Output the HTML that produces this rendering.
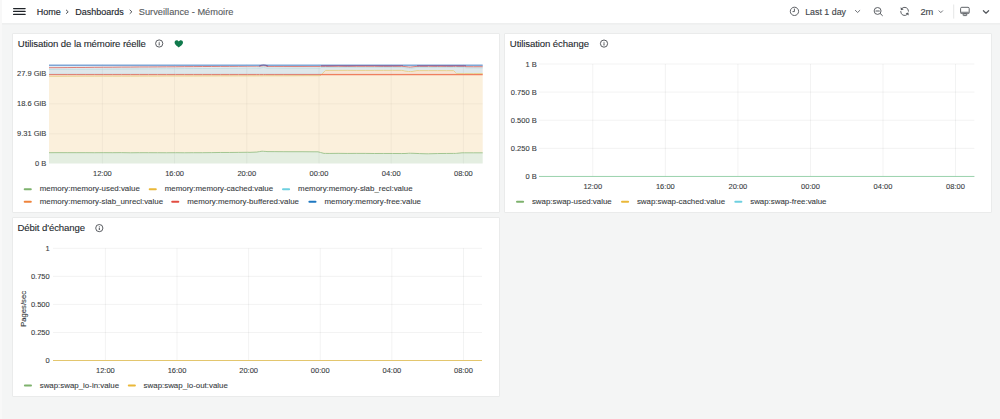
<!DOCTYPE html><html><head><meta charset="utf-8"><title>Surveillance - Mémoire</title><style>
html,body{margin:0;padding:0;}
body{width:1000px;height:419px;overflow:hidden;background:#f4f5f5;font-family:"Liberation Sans", sans-serif;position:relative;}
.strip{position:absolute;left:0;top:0;width:2px;height:419px;background:#f8f8f8;z-index:5;}
.hdr{position:absolute;left:0;top:0;width:1000px;height:23px;background:#fff;box-shadow:0 1px 0 #eeefef, 0 2px 1px rgba(0,0,0,0.015);}
.panel{position:absolute;background:#fff;box-shadow:inset 0 0 0 1px #eaebeb;border-radius:1px;}
svg{position:absolute;left:0;top:0;overflow:visible;font-family:"Liberation Sans", sans-serif;}
.wrap{position:absolute;left:0;top:0;width:1000px;height:419px;}

</style></head><body>
<div class="wrap"><div class="strip"></div>
<div class="hdr"><svg width="1000" height="23" viewBox="0 0 1000 23">
<line x1="13.6" y1="8.5" x2="25.1" y2="8.5" stroke="#1f2328" stroke-width="1.25" stroke-linecap="round"/>
<line x1="13.6" y1="11.44" x2="25.1" y2="11.44" stroke="#1f2328" stroke-width="1.25" stroke-linecap="round"/>
<line x1="13.6" y1="14.42" x2="25.1" y2="14.42" stroke="#1f2328" stroke-width="1.25" stroke-linecap="round"/>
<text x="36.7" y="14.7" font-size="9" fill="#24292e" text-anchor="start" font-weight="400" stroke="#24292e" stroke-width="0.15">Home</text>
<path d="M66.3,10.1 L68.2,11.8 L66.3,13.5" fill="none" stroke="#4a4e53" stroke-width="0.95" stroke-linecap="round" stroke-linejoin="round"/>
<text x="75.3" y="14.7" font-size="9" fill="#24292e" text-anchor="start" font-weight="400" stroke="#24292e" stroke-width="0.15">Dashboards</text>
<path d="M130.0,10.1 L131.9,11.8 L130.0,13.5" fill="none" stroke="#4a4e53" stroke-width="0.95" stroke-linecap="round" stroke-linejoin="round"/>
<text x="138.8" y="14.7" font-size="9.25" fill="#575b60" text-anchor="start" font-weight="400" stroke="#575b60" stroke-width="0.12">Surveillance - Mémoire</text>
<circle cx="794.45" cy="11.35" r="4.15" fill="none" stroke="#55595e" stroke-width="0.95"/>
<path d="M794.4,9.0 L794.4,11.6 L792.9,11.6" fill="none" stroke="#55595e" stroke-width="0.95" stroke-linecap="round" stroke-linejoin="round"/>
<text x="805.2" y="14.9" font-size="8.85" fill="#44484d" text-anchor="start" font-weight="400" stroke="#44484d" stroke-width="0.15">Last 1 day</text>
<path d="M855.4,10.4 L857.6,12.5 L859.8,10.4" fill="none" stroke="#55595e" stroke-width="0.85" stroke-linecap="round" stroke-linejoin="round"/>
<circle cx="877.6" cy="10.95" r="3.45" fill="none" stroke="#55595e" stroke-width="0.95"/>
<line x1="875.9" y1="10.95" x2="879.3" y2="10.95" stroke="#55595e" stroke-width="1.1" stroke-linecap="round"/>
<line x1="880.3" y1="13.6" x2="882.4" y2="15.6" stroke="#55595e" stroke-width="1.0" stroke-linecap="round"/>
<path d="M902.0,8.3 A3.9,3.9 0 0 1 908.5,11.2" fill="none" stroke="#55595e" stroke-width="0.95" stroke-linecap="round"/>
<path d="M907.2,14.5 A3.9,3.9 0 0 1 900.7,11.5" fill="none" stroke="#55595e" stroke-width="0.95" stroke-linecap="round"/>
<path d="M900.6,7.3 L900.9,10.3 L903.7,9.6 Z" fill="#55595e"/>
<path d="M908.7,15.5 L908.4,12.5 L905.6,13.2 Z" fill="#55595e"/>
<text x="920.4" y="14.8" font-size="9.3" fill="#44484d" text-anchor="start" font-weight="400" stroke="#44484d" stroke-width="0.15">2m</text>
<path d="M939.0,10.8 L940.8,12.6 L942.6,10.8" fill="none" stroke="#55595e" stroke-width="0.85" stroke-linecap="round" stroke-linejoin="round"/>
<line x1="953.7" y1="4.5" x2="953.7" y2="18.6" stroke="rgba(36,41,46,0.15)" stroke-width="0.8"/>
<rect x="960.6" y="7.3" width="8.6" height="6.3" rx="1.2" fill="none" stroke="#55595e" stroke-width="0.95"/>
<rect x="960.6" y="11.7" width="8.6" height="1.9" fill="#8b8e92"/>
<rect x="963.2" y="13.9" width="3.5" height="1.7" rx="0.3" fill="none" stroke="#55595e" stroke-width="0.9"/>
<path d="M983.4,10.7 L986.0,13.2 L988.6,10.7" fill="none" stroke="#55595e" stroke-width="1.25" stroke-linecap="round" stroke-linejoin="round"/>
</svg></div>
<div class="panel" style="left:12px;top:33px;width:488px;height:180px">
<svg width="488" height="180" viewBox="12 33 488 180">
<text x="17.8" y="47.199999999999996" font-size="9.6" fill="#24292e" text-anchor="start" font-weight="400" stroke="#24292e" stroke-width="0.1" letter-spacing="-0.1">Utilisation de la mémoire réelle</text>
<circle cx="159.2" cy="43.5" r="3.6" fill="none" stroke="#3d4147" stroke-width="0.85"/><circle cx="159.2" cy="42.15" r="0.5" fill="#3d4147"/><line x1="159.2" y1="43.55" x2="159.2" y2="45.0" stroke="#3d4147" stroke-width="0.95" stroke-linecap="round"/>
<path transform="translate(178.8,43.8)" d="M0,3.6 C-1.2,2.6 -4.2,0.6 -4.2,-1.4 C-4.2,-2.8 -3.2,-3.6 -2.1,-3.6 C-1.1,-3.6 -0.4,-3.0 0,-2.3 C0.4,-3.0 1.1,-3.6 2.1,-3.6 C3.2,-3.6 4.2,-2.8 4.2,-1.4 C4.2,0.6 1.2,2.6 0,3.6 Z" fill="#107a4c"/>
<text x="46.2" y="76.1" font-size="7.5" fill="#383c41" text-anchor="end" font-weight="400" stroke="#383c41" stroke-width="0.1">27.9 GiB</text>
<text x="46.2" y="106.2" font-size="7.5" fill="#383c41" text-anchor="end" font-weight="400" stroke="#383c41" stroke-width="0.1">18.6 GiB</text>
<text x="46.2" y="136.20000000000002" font-size="7.5" fill="#383c41" text-anchor="end" font-weight="400" stroke="#383c41" stroke-width="0.1">9.31 GiB</text>
<text x="46.2" y="165.9" font-size="7.5" fill="#383c41" text-anchor="end" font-weight="400" stroke="#383c41" stroke-width="0.1">0 B</text>
<text x="102.4" y="175.9" font-size="7.5" fill="#383c41" text-anchor="middle" font-weight="400" stroke="#383c41" stroke-width="0.1">12:00</text>
<text x="174.6" y="175.9" font-size="7.5" fill="#383c41" text-anchor="middle" font-weight="400" stroke="#383c41" stroke-width="0.1">16:00</text>
<text x="246.8" y="175.9" font-size="7.5" fill="#383c41" text-anchor="middle" font-weight="400" stroke="#383c41" stroke-width="0.1">20:00</text>
<text x="319.0" y="175.9" font-size="7.5" fill="#383c41" text-anchor="middle" font-weight="400" stroke="#383c41" stroke-width="0.1">00:00</text>
<text x="391.2" y="175.9" font-size="7.5" fill="#383c41" text-anchor="middle" font-weight="400" stroke="#383c41" stroke-width="0.1">04:00</text>
<text x="463.4" y="175.9" font-size="7.5" fill="#383c41" text-anchor="middle" font-weight="400" stroke="#383c41" stroke-width="0.1">08:00</text>
<path d="M49.0,152.70 L58.0,152.65 L67.1,152.66 L76.1,152.67 L85.1,152.66 L94.2,152.71 L103.2,152.66 L112.2,152.69 L121.3,152.64 L130.3,152.77 L139.3,152.68 L148.4,152.69 L157.4,152.71 L166.5,152.76 L175.5,152.69 L184.5,152.77 L193.6,152.70 L200.0,152.70 L202.6,152.69 L211.6,152.62 L220.7,152.48 L229.7,152.48 L238.7,152.38 L247.8,152.29 L250.0,152.35 L256.8,152.06 L257.0,152.00 L259.5,151.60 L260.0,151.52 L262.0,151.20 L263.5,151.32 L265.9,151.46 L267.0,151.60 L274.9,151.63 L283.9,151.70 L293.0,151.71 L302.0,151.71 L311.0,151.78 L318.0,151.80 L320.1,152.36 L320.5,152.47 L321.0,152.60 L324.0,153.40 L325.5,153.40 L329.1,153.45 L338.1,153.35 L347.2,153.44 L356.2,153.40 L365.2,153.42 L374.3,153.51 L383.3,153.47 L392.4,153.49 L401.4,153.54 L403.0,153.50 L405.0,153.50 L408.5,153.29 L410.0,153.20 L410.4,153.28 L412.0,153.28 L417.0,153.48 L419.4,153.57 L420.0,153.60 L427.0,153.80 L428.5,153.78 L437.5,153.56 L440.0,153.50 L446.6,153.46 L453.6,153.41 L455.6,153.43 L456.0,153.40 L456.4,153.36 L462.0,152.80 L464.6,152.79 L466.0,152.80 L473.7,152.81 L482.7,152.80 L482.7,163.60 L49.0,163.60 Z" fill="#e4eee1"/>
<path d="M49.0,76.30 L58.0,76.32 L67.1,76.25 L76.1,76.22 L85.1,76.20 L94.2,76.18 L103.2,76.16 L112.2,76.17 L121.3,76.17 L130.3,76.15 L139.3,76.10 L148.4,76.09 L157.4,76.08 L166.5,76.01 L175.5,76.03 L184.5,76.03 L193.6,76.00 L200.0,75.97 L202.6,75.98 L211.6,75.94 L220.7,75.89 L229.7,75.92 L238.7,75.87 L247.8,75.88 L250.0,75.85 L256.8,75.88 L257.0,75.84 L259.5,75.83 L260.0,75.83 L262.0,75.83 L263.5,75.83 L265.9,75.81 L267.0,75.82 L274.9,75.79 L283.9,75.82 L293.0,75.78 L302.0,75.71 L311.0,75.69 L318.0,75.70 L320.1,75.67 L320.5,75.50 L321.0,74.99 L324.0,71.93 L325.5,70.40 L329.1,70.43 L338.1,70.42 L347.2,70.37 L356.2,70.43 L365.2,70.44 L374.3,70.41 L383.3,70.39 L392.4,70.40 L401.4,70.37 L403.0,70.50 L405.0,71.07 L408.5,71.50 L410.0,71.50 L410.4,71.46 L412.0,71.50 L417.0,70.60 L419.4,70.64 L420.0,70.60 L427.0,70.60 L428.5,70.61 L437.5,70.60 L440.0,70.60 L446.6,70.63 L453.6,70.60 L455.6,72.66 L456.0,73.09 L456.4,73.60 L462.0,73.60 L464.6,73.63 L466.0,73.60 L473.7,73.63 L482.7,73.60 L482.7,152.80 L473.7,152.81 L466.0,152.80 L464.6,152.79 L462.0,152.80 L456.4,153.36 L456.0,153.40 L455.6,153.43 L453.6,153.41 L446.6,153.46 L440.0,153.50 L437.5,153.56 L428.5,153.78 L427.0,153.80 L420.0,153.60 L419.4,153.57 L417.0,153.48 L412.0,153.28 L410.4,153.28 L410.0,153.20 L408.5,153.29 L405.0,153.50 L403.0,153.50 L401.4,153.54 L392.4,153.49 L383.3,153.47 L374.3,153.51 L365.2,153.42 L356.2,153.40 L347.2,153.44 L338.1,153.35 L329.1,153.45 L325.5,153.40 L324.0,153.40 L321.0,152.60 L320.5,152.47 L320.1,152.36 L318.0,151.80 L311.0,151.78 L302.0,151.71 L293.0,151.71 L283.9,151.70 L274.9,151.63 L267.0,151.60 L265.9,151.46 L263.5,151.32 L262.0,151.20 L260.0,151.52 L259.5,151.60 L257.0,152.00 L256.8,152.06 L250.0,152.35 L247.8,152.29 L238.7,152.38 L229.7,152.48 L220.7,152.48 L211.6,152.62 L202.6,152.69 L200.0,152.70 L193.6,152.70 L184.5,152.77 L175.5,152.69 L166.5,152.76 L157.4,152.71 L148.4,152.69 L139.3,152.68 L130.3,152.77 L121.3,152.64 L112.2,152.69 L103.2,152.66 L94.2,152.71 L85.1,152.66 L76.1,152.67 L67.1,152.66 L58.0,152.65 L49.0,152.70 Z" fill="#fbf0dc"/>
<path d="M49.0,74.60 L58.0,74.60 L67.1,74.60 L76.1,74.60 L85.1,74.60 L94.2,74.60 L103.2,74.60 L112.2,74.60 L121.3,74.60 L130.3,74.60 L139.3,74.60 L148.4,74.60 L157.4,74.60 L166.5,74.60 L175.5,74.60 L184.5,74.60 L193.6,74.60 L200.0,74.60 L202.6,74.60 L211.6,74.60 L220.7,74.60 L229.7,74.60 L238.7,74.60 L247.8,74.60 L250.0,74.60 L256.8,74.60 L257.0,74.60 L259.5,74.60 L260.0,74.60 L262.0,74.60 L263.5,74.60 L265.9,74.60 L267.0,74.60 L274.9,74.60 L283.9,74.60 L293.0,74.60 L302.0,74.60 L311.0,74.60 L318.0,74.60 L320.1,74.60 L320.5,74.60 L321.0,74.60 L324.0,74.60 L325.5,74.60 L329.1,74.60 L338.1,74.60 L347.2,74.60 L356.2,74.60 L365.2,74.60 L374.3,74.60 L383.3,74.60 L392.4,74.60 L401.4,74.60 L403.0,74.60 L405.0,74.60 L408.5,74.60 L410.0,74.60 L410.4,74.60 L412.0,74.60 L417.0,74.60 L419.4,74.60 L420.0,74.60 L427.0,74.60 L428.5,74.60 L437.5,74.60 L440.0,74.60 L446.6,74.60 L453.6,74.60 L455.6,74.60 L456.0,74.60 L456.4,74.60 L462.0,74.60 L464.6,74.60 L466.0,74.60 L473.7,74.60 L482.7,74.60 L482.7,73.60 L473.7,73.63 L466.0,73.60 L464.6,73.63 L462.0,73.60 L456.4,73.60 L456.0,73.09 L455.6,72.66 L453.6,70.60 L446.6,70.63 L440.0,70.60 L437.5,70.60 L428.5,70.61 L427.0,70.60 L420.0,70.60 L419.4,70.64 L417.0,70.60 L412.0,71.50 L410.4,71.46 L410.0,71.50 L408.5,71.50 L405.0,71.07 L403.0,70.50 L401.4,70.37 L392.4,70.40 L383.3,70.39 L374.3,70.41 L365.2,70.44 L356.2,70.43 L347.2,70.37 L338.1,70.42 L329.1,70.43 L325.5,70.40 L324.0,71.93 L321.0,74.99 L320.5,75.50 L320.1,75.67 L318.0,75.70 L311.0,75.69 L302.0,75.71 L293.0,75.78 L283.9,75.82 L274.9,75.79 L267.0,75.82 L265.9,75.81 L263.5,75.83 L262.0,75.83 L260.0,75.83 L259.5,75.83 L257.0,75.84 L256.8,75.88 L250.0,75.85 L247.8,75.88 L238.7,75.87 L229.7,75.92 L220.7,75.89 L211.6,75.94 L202.6,75.98 L200.0,75.97 L193.6,76.00 L184.5,76.03 L175.5,76.03 L166.5,76.01 L157.4,76.08 L148.4,76.09 L139.3,76.10 L130.3,76.15 L121.3,76.17 L112.2,76.17 L103.2,76.16 L94.2,76.18 L85.1,76.20 L76.1,76.22 L67.1,76.25 L58.0,76.32 L49.0,76.30 Z" fill="#f8e4d3"/>
<path d="M49.0,69.50 L58.0,69.42 L67.1,69.37 L76.1,69.31 L85.1,69.29 L94.2,69.24 L103.2,69.11 L112.2,69.05 L121.3,69.00 L130.3,68.94 L139.3,68.90 L148.4,68.85 L157.4,68.76 L166.5,68.68 L175.5,68.65 L184.5,68.59 L193.6,68.55 L200.0,68.50 L202.6,68.52 L211.6,68.44 L220.7,68.36 L229.7,68.31 L238.7,68.26 L247.8,68.15 L250.0,68.17 L256.8,68.15 L257.0,68.12 L259.5,68.10 L260.0,68.10 L262.0,67.70 L263.5,67.40 L265.9,67.89 L267.0,68.10 L274.9,68.13 L283.9,68.12 L293.0,68.09 L302.0,68.09 L311.0,68.07 L318.0,68.10 L320.1,68.11 L320.5,68.10 L321.0,67.40 L324.0,67.40 L325.5,67.40 L329.1,67.36 L338.1,67.37 L347.2,67.38 L356.2,67.37 L365.2,67.39 L374.3,67.36 L383.3,67.36 L392.4,67.37 L401.4,67.37 L403.0,67.40 L405.0,67.69 L408.5,68.19 L410.0,68.40 L410.4,68.33 L412.0,68.11 L417.0,67.40 L419.4,67.36 L420.0,67.40 L427.0,67.40 L428.5,67.43 L437.5,67.41 L440.0,67.40 L446.6,67.37 L453.6,67.40 L455.6,67.38 L456.0,67.40 L456.4,67.40 L462.0,67.40 L464.6,67.39 L466.0,67.90 L473.7,67.89 L482.7,67.90 L482.7,73.60 L473.7,73.63 L466.0,73.60 L464.6,73.63 L462.0,73.60 L456.4,73.60 L456.0,73.09 L455.6,72.66 L453.6,70.60 L446.6,70.63 L440.0,70.60 L437.5,70.60 L428.5,70.61 L427.0,70.60 L420.0,70.60 L419.4,70.64 L417.0,70.60 L412.0,71.50 L410.4,71.46 L410.0,71.50 L408.5,71.50 L405.0,71.07 L403.0,70.50 L401.4,70.37 L392.4,70.40 L383.3,70.39 L374.3,70.41 L365.2,70.44 L356.2,70.43 L347.2,70.37 L338.1,70.42 L329.1,70.43 L325.5,70.40 L324.0,71.93 L321.0,74.60 L320.5,74.60 L320.1,74.60 L318.0,74.60 L311.0,74.60 L302.0,74.60 L293.0,74.60 L283.9,74.60 L274.9,74.60 L267.0,74.60 L265.9,74.60 L263.5,74.60 L262.0,74.60 L260.0,74.60 L259.5,74.60 L257.0,74.60 L256.8,74.60 L250.0,74.60 L247.8,74.60 L238.7,74.60 L229.7,74.60 L220.7,74.60 L211.6,74.60 L202.6,74.60 L200.0,74.60 L193.6,74.60 L184.5,74.60 L175.5,74.60 L166.5,74.60 L157.4,74.60 L148.4,74.60 L139.3,74.60 L130.3,74.60 L121.3,74.60 L112.2,74.60 L103.2,74.60 L94.2,74.60 L85.1,74.60 L76.1,74.60 L67.1,74.60 L58.0,74.60 L49.0,74.60 Z" fill="#dfe7ea"/>
<path d="M49.0,67.70 L58.0,67.66 L67.1,67.58 L76.1,67.48 L85.1,67.46 L94.2,67.33 L103.2,67.28 L112.2,67.24 L121.3,67.12 L130.3,67.08 L139.3,66.98 L148.4,66.96 L157.4,66.90 L166.5,66.82 L175.5,66.77 L184.5,66.66 L193.6,66.62 L200.0,66.55 L202.6,66.54 L211.6,66.47 L220.7,66.39 L229.7,66.36 L238.7,66.30 L247.8,66.19 L250.0,66.18 L256.8,66.14 L257.0,66.12 L259.5,66.10 L260.0,66.10 L262.0,65.90 L263.5,65.75 L265.9,65.95 L267.0,66.40 L274.9,66.42 L283.9,66.41 L293.0,66.44 L302.0,66.43 L311.0,66.38 L318.0,66.40 L320.1,66.39 L320.5,66.40 L321.0,66.35 L324.0,66.35 L325.5,66.35 L329.1,66.36 L338.1,66.31 L347.2,66.35 L356.2,66.32 L365.2,66.32 L374.3,66.31 L383.3,66.37 L392.4,66.32 L401.4,66.33 L403.0,66.35 L405.0,66.58 L408.5,66.98 L410.0,67.15 L410.4,67.09 L412.0,66.92 L417.0,66.35 L419.4,66.38 L420.0,66.35 L427.0,66.35 L428.5,66.32 L437.5,66.35 L440.0,66.35 L446.6,66.35 L453.6,66.35 L455.6,66.38 L456.0,66.35 L456.4,66.35 L462.0,66.35 L464.6,66.38 L466.0,66.70 L473.7,66.73 L482.7,66.70 L482.7,67.90 L473.7,67.89 L466.0,67.90 L464.6,67.39 L462.0,67.40 L456.4,67.40 L456.0,67.40 L455.6,67.38 L453.6,67.40 L446.6,67.37 L440.0,67.40 L437.5,67.41 L428.5,67.43 L427.0,67.40 L420.0,67.40 L419.4,67.36 L417.0,67.40 L412.0,68.11 L410.4,68.33 L410.0,68.40 L408.5,68.19 L405.0,67.69 L403.0,67.40 L401.4,67.37 L392.4,67.37 L383.3,67.36 L374.3,67.36 L365.2,67.39 L356.2,67.37 L347.2,67.38 L338.1,67.37 L329.1,67.36 L325.5,67.40 L324.0,67.40 L321.0,67.40 L320.5,68.10 L320.1,68.11 L318.0,68.10 L311.0,68.07 L302.0,68.09 L293.0,68.09 L283.9,68.12 L274.9,68.13 L267.0,68.10 L265.9,67.89 L263.5,67.40 L262.0,67.70 L260.0,68.10 L259.5,68.10 L257.0,68.12 L256.8,68.15 L250.0,68.17 L247.8,68.15 L238.7,68.26 L229.7,68.31 L220.7,68.36 L211.6,68.44 L202.6,68.52 L200.0,68.50 L193.6,68.55 L184.5,68.59 L175.5,68.65 L166.5,68.68 L157.4,68.76 L148.4,68.85 L139.3,68.90 L130.3,68.94 L121.3,69.00 L112.2,69.05 L103.2,69.11 L94.2,69.24 L85.1,69.29 L76.1,69.31 L67.1,69.37 L58.0,69.42 L49.0,69.50 Z" fill="#e6ebee"/>
<path d="M49.0,65.20 L58.0,65.19 L67.1,65.18 L76.1,65.21 L85.1,65.17 L94.2,65.20 L103.2,65.19 L112.2,65.17 L121.3,65.20 L130.3,65.17 L139.3,65.20 L148.4,65.17 L157.4,65.18 L166.5,65.20 L175.5,65.22 L184.5,65.18 L193.6,65.18 L200.0,65.20 L202.6,65.21 L211.6,65.23 L220.7,65.20 L229.7,65.19 L238.7,65.23 L247.8,65.17 L250.0,65.20 L256.8,65.22 L257.0,65.20 L259.5,65.20 L260.0,65.20 L262.0,65.20 L263.5,65.20 L265.9,65.19 L267.0,65.20 L274.9,65.18 L283.9,65.18 L293.0,65.19 L302.0,65.22 L311.0,65.18 L318.0,65.20 L320.1,65.20 L320.5,65.20 L321.0,65.20 L324.0,65.20 L325.5,65.20 L329.1,65.21 L338.1,65.19 L347.2,65.20 L356.2,65.17 L365.2,65.17 L374.3,65.18 L383.3,65.21 L392.4,65.20 L401.4,65.19 L403.0,65.20 L405.0,65.20 L408.5,65.20 L410.0,65.20 L410.4,65.21 L412.0,65.20 L417.0,65.20 L419.4,65.20 L420.0,65.20 L427.0,65.20 L428.5,65.19 L437.5,65.22 L440.0,65.20 L446.6,65.21 L453.6,65.20 L455.6,65.18 L456.0,65.20 L456.4,65.20 L462.0,65.20 L464.6,65.20 L466.0,65.20 L473.7,65.20 L482.7,65.20 L482.7,66.70 L473.7,66.73 L466.0,66.70 L464.6,66.38 L462.0,66.35 L456.4,66.35 L456.0,66.35 L455.6,66.38 L453.6,66.35 L446.6,66.35 L440.0,66.35 L437.5,66.35 L428.5,66.32 L427.0,66.35 L420.0,66.35 L419.4,66.38 L417.0,66.35 L412.0,66.92 L410.4,67.09 L410.0,67.15 L408.5,66.98 L405.0,66.58 L403.0,66.35 L401.4,66.33 L392.4,66.32 L383.3,66.37 L374.3,66.31 L365.2,66.32 L356.2,66.32 L347.2,66.35 L338.1,66.31 L329.1,66.36 L325.5,66.35 L324.0,66.35 L321.0,66.35 L320.5,66.40 L320.1,66.39 L318.0,66.40 L311.0,66.38 L302.0,66.43 L293.0,66.44 L283.9,66.41 L274.9,66.42 L267.0,66.40 L265.9,65.95 L263.5,65.75 L262.0,65.90 L260.0,66.10 L259.5,66.10 L257.0,66.12 L256.8,66.14 L250.0,66.18 L247.8,66.19 L238.7,66.30 L229.7,66.36 L220.7,66.39 L211.6,66.47 L202.6,66.54 L200.0,66.55 L193.6,66.62 L184.5,66.66 L175.5,66.77 L166.5,66.82 L157.4,66.90 L148.4,66.96 L139.3,66.98 L130.3,67.08 L121.3,67.12 L112.2,67.24 L103.2,67.28 L94.2,67.33 L85.1,67.46 L76.1,67.48 L67.1,67.58 L58.0,67.66 L49.0,67.70 Z" fill="#e3ebf3"/>
<line x1="102.4" y1="64" x2="102.4" y2="163.6" stroke="rgba(0,10,23,0.07)" stroke-width="0.6"/>
<line x1="174.6" y1="64" x2="174.6" y2="163.6" stroke="rgba(0,10,23,0.07)" stroke-width="0.6"/>
<line x1="246.8" y1="64" x2="246.8" y2="163.6" stroke="rgba(0,10,23,0.07)" stroke-width="0.6"/>
<line x1="319.0" y1="64" x2="319.0" y2="163.6" stroke="rgba(0,10,23,0.07)" stroke-width="0.6"/>
<line x1="391.2" y1="64" x2="391.2" y2="163.6" stroke="rgba(0,10,23,0.07)" stroke-width="0.6"/>
<line x1="463.4" y1="64" x2="463.4" y2="163.6" stroke="rgba(0,10,23,0.07)" stroke-width="0.6"/>
<line x1="49" y1="73.8" x2="482.7" y2="73.8" stroke="rgba(0,10,23,0.07)" stroke-width="0.6"/>
<line x1="49" y1="103.9" x2="482.7" y2="103.9" stroke="rgba(0,10,23,0.07)" stroke-width="0.6"/>
<line x1="49" y1="133.9" x2="482.7" y2="133.9" stroke="rgba(0,10,23,0.07)" stroke-width="0.6"/>
<path stroke-linejoin="round" d="M49.0,152.70 L58.0,152.65 L67.1,152.66 L76.1,152.67 L85.1,152.66 L94.2,152.71 L103.2,152.66 L112.2,152.69 L121.3,152.64 L130.3,152.77 L139.3,152.68 L148.4,152.69 L157.4,152.71 L166.5,152.76 L175.5,152.69 L184.5,152.77 L193.6,152.70 L200.0,152.70 L202.6,152.69 L211.6,152.62 L220.7,152.48 L229.7,152.48 L238.7,152.38 L247.8,152.29 L250.0,152.35 L256.8,152.06 L257.0,152.00 L259.5,151.60 L260.0,151.52 L262.0,151.20 L263.5,151.32 L265.9,151.46 L267.0,151.60 L274.9,151.63 L283.9,151.70 L293.0,151.71 L302.0,151.71 L311.0,151.78 L318.0,151.80 L320.1,152.36 L320.5,152.47 L321.0,152.60 L324.0,153.40 L325.5,153.40 L329.1,153.45 L338.1,153.35 L347.2,153.44 L356.2,153.40 L365.2,153.42 L374.3,153.51 L383.3,153.47 L392.4,153.49 L401.4,153.54 L403.0,153.50 L405.0,153.50 L408.5,153.29 L410.0,153.20 L410.4,153.28 L412.0,153.28 L417.0,153.48 L419.4,153.57 L420.0,153.60 L427.0,153.80 L428.5,153.78 L437.5,153.56 L440.0,153.50 L446.6,153.46 L453.6,153.41 L455.6,153.43 L456.0,153.40 L456.4,153.36 L462.0,152.80 L464.6,152.79 L466.0,152.80 L473.7,152.81 L482.7,152.80" fill="none" stroke="#92bd82" stroke-width="0.85"/>
<path stroke-linejoin="round" d="M49.0,76.30 L58.0,76.32 L67.1,76.25 L76.1,76.22 L85.1,76.20 L94.2,76.18 L103.2,76.16 L112.2,76.17 L121.3,76.17 L130.3,76.15 L139.3,76.10 L148.4,76.09 L157.4,76.08 L166.5,76.01 L175.5,76.03 L184.5,76.03 L193.6,76.00 L200.0,75.97 L202.6,75.98 L211.6,75.94 L220.7,75.89 L229.7,75.92 L238.7,75.87 L247.8,75.88 L250.0,75.85 L256.8,75.88 L257.0,75.84 L259.5,75.83 L260.0,75.83 L262.0,75.83 L263.5,75.83 L265.9,75.81 L267.0,75.82 L274.9,75.79 L283.9,75.82 L293.0,75.78 L302.0,75.71 L311.0,75.69 L318.0,75.70 L320.1,75.67 L320.5,75.50 L321.0,74.99 L324.0,71.93 L325.5,70.40 L329.1,70.43 L338.1,70.42 L347.2,70.37 L356.2,70.43 L365.2,70.44 L374.3,70.41 L383.3,70.39 L392.4,70.40 L401.4,70.37 L403.0,70.50 L405.0,71.07 L408.5,71.50 L410.0,71.50 L410.4,71.46 L412.0,71.50 L417.0,70.60 L419.4,70.64 L420.0,70.60 L427.0,70.60 L428.5,70.61 L437.5,70.60 L440.0,70.60 L446.6,70.63 L453.6,70.60 L455.6,72.66 L456.0,73.09 L456.4,73.60 L462.0,73.60 L464.6,73.63 L466.0,73.60 L473.7,73.63 L482.7,73.60" fill="none" stroke="#e6cf86" stroke-width="0.9"/>
<path stroke-linejoin="round" d="M49.0,74.60 L58.0,74.60 L67.1,74.60 L76.1,74.60 L85.1,74.60 L94.2,74.60 L103.2,74.60 L112.2,74.60 L121.3,74.60 L130.3,74.60 L139.3,74.60 L148.4,74.60 L157.4,74.60 L166.5,74.60 L175.5,74.60 L184.5,74.60 L193.6,74.60 L200.0,74.60 L202.6,74.60 L211.6,74.60 L220.7,74.60 L229.7,74.60 L238.7,74.60 L247.8,74.60 L250.0,74.60 L256.8,74.60 L257.0,74.60 L259.5,74.60 L260.0,74.60 L262.0,74.60 L263.5,74.60 L265.9,74.60 L267.0,74.60 L274.9,74.60 L283.9,74.60 L293.0,74.60 L302.0,74.60 L311.0,74.60 L318.0,74.60 L320.1,74.60 L320.5,74.60 L321.0,74.60" fill="none" stroke="#de7a6c" stroke-width="1.0"/>
<path stroke-linejoin="round" d="M320.1,74.60 L320.5,74.60 L321.0,74.60 L324.0,74.60 L325.5,74.60 L329.1,74.60 L338.1,74.60 L347.2,74.60 L356.2,74.60 L365.2,74.60 L374.3,74.60 L383.3,74.60 L392.4,74.60 L401.4,74.60 L403.0,74.60 L405.0,74.60 L408.5,74.60 L410.0,74.60 L410.4,74.60 L412.0,74.60 L417.0,74.60 L419.4,74.60 L420.0,74.60 L427.0,74.60 L428.5,74.60 L437.5,74.60 L440.0,74.60 L446.6,74.60 L453.6,74.60 L455.6,74.60 L456.0,74.60 L456.4,74.60 L462.0,74.60 L464.6,74.60 L466.0,74.60 L473.7,74.60 L482.7,74.60" fill="none" stroke="#ef7f5f" stroke-width="1.15"/>
<path stroke-linejoin="round" d="M49.0,69.50 L58.0,69.42 L67.1,69.37 L76.1,69.31 L85.1,69.29 L94.2,69.24 L103.2,69.11 L112.2,69.05 L121.3,69.00 L130.3,68.94 L139.3,68.90 L148.4,68.85 L157.4,68.76 L166.5,68.68 L175.5,68.65 L184.5,68.59 L193.6,68.55 L200.0,68.50 L202.6,68.52 L211.6,68.44 L220.7,68.36 L229.7,68.31 L238.7,68.26 L247.8,68.15 L250.0,68.17 L256.8,68.15 L257.0,68.12 L259.5,68.10 L260.0,68.10 L262.0,67.70 L263.5,67.40 L265.9,67.89 L267.0,68.10 L274.9,68.13 L283.9,68.12 L293.0,68.09 L302.0,68.09 L311.0,68.07 L318.0,68.10 L320.1,68.11 L320.5,68.10 L321.0,67.40 L324.0,67.40 L325.5,67.40 L329.1,67.36 L338.1,67.37 L347.2,67.38 L356.2,67.37 L365.2,67.39 L374.3,67.36 L383.3,67.36 L392.4,67.37 L401.4,67.37 L403.0,67.40 L405.0,67.69 L408.5,68.19 L410.0,68.40 L410.4,68.33 L412.0,68.11 L417.0,67.40 L419.4,67.36 L420.0,67.40 L427.0,67.40 L428.5,67.43 L437.5,67.41 L440.0,67.40 L446.6,67.37 L453.6,67.40 L455.6,67.38 L456.0,67.40 L456.4,67.40 L462.0,67.40 L464.6,67.39 L466.0,67.90 L473.7,67.89 L482.7,67.90" fill="none" stroke="#b2d9e0" stroke-width="0.7"/>
<path stroke-linejoin="round" d="M49.0,67.70 L58.0,67.66 L67.1,67.58 L76.1,67.48 L85.1,67.46 L94.2,67.33 L103.2,67.28 L112.2,67.24 L121.3,67.12 L130.3,67.08 L139.3,66.98 L148.4,66.96 L157.4,66.90 L166.5,66.82 L175.5,66.77 L184.5,66.66 L193.6,66.62 L200.0,66.55 L202.6,66.54 L211.6,66.47 L220.7,66.39 L229.7,66.36 L238.7,66.30 L247.8,66.19 L250.0,66.18 L256.8,66.14 L257.0,66.12 L259.5,66.10 L260.0,66.10 L262.0,65.90 L263.5,65.75 L265.9,65.95 L267.0,66.40 L274.9,66.42 L283.9,66.41 L293.0,66.44 L302.0,66.43 L311.0,66.38 L318.0,66.40 L320.1,66.39 L320.5,66.40 L321.0,66.35 L324.0,66.35 L325.5,66.35 L329.1,66.36 L338.1,66.31 L347.2,66.35 L356.2,66.32 L365.2,66.32 L374.3,66.31 L383.3,66.37 L392.4,66.32 L401.4,66.33 L403.0,66.35 L405.0,66.58 L408.5,66.98 L410.0,67.15 L410.4,67.09 L412.0,66.92 L417.0,66.35 L419.4,66.38 L420.0,66.35 L427.0,66.35 L428.5,66.32 L437.5,66.35 L440.0,66.35 L446.6,66.35 L453.6,66.35 L455.6,66.38 L456.0,66.35 L456.4,66.35 L462.0,66.35 L464.6,66.38 L466.0,66.70 L473.7,66.73 L482.7,66.70" fill="none" stroke="#d9706a" stroke-width="0.9"/>
<path stroke-linejoin="round" d="M49.0,65.20 L58.0,65.19 L67.1,65.18 L76.1,65.21 L85.1,65.17 L94.2,65.20 L103.2,65.19 L112.2,65.17 L121.3,65.20 L130.3,65.17 L139.3,65.20 L148.4,65.17 L157.4,65.18 L166.5,65.20 L175.5,65.22 L184.5,65.18 L193.6,65.18 L200.0,65.20 L202.6,65.21 L211.6,65.23 L220.7,65.20 L229.7,65.19 L238.7,65.23 L247.8,65.17 L250.0,65.20 L256.8,65.22 L257.0,65.20 L259.5,65.20 L260.0,65.20 L262.0,65.20 L263.5,65.20 L265.9,65.19 L267.0,65.20 L274.9,65.18 L283.9,65.18 L293.0,65.19 L302.0,65.22 L311.0,65.18 L318.0,65.20 L320.1,65.20 L320.5,65.20 L321.0,65.20 L324.0,65.20 L325.5,65.20 L329.1,65.21 L338.1,65.19 L347.2,65.20 L356.2,65.17 L365.2,65.17 L374.3,65.18 L383.3,65.21 L392.4,65.20 L401.4,65.19 L403.0,65.20 L405.0,65.20 L408.5,65.20 L410.0,65.20 L410.4,65.21 L412.0,65.20 L417.0,65.20 L419.4,65.20 L420.0,65.20 L427.0,65.20 L428.5,65.19 L437.5,65.22 L440.0,65.20 L446.6,65.21 L453.6,65.20 L455.6,65.18 L456.0,65.20 L456.4,65.20 L462.0,65.20 L464.6,65.20 L466.0,65.20 L473.7,65.20 L482.7,65.20" fill="none" stroke="#7ea6d6" stroke-width="1.5"/>
<path stroke-linejoin="round" d="M321.0,65.55 L324.0,65.55 L325.5,65.55 L329.1,65.56 L338.1,65.54 L347.2,65.55 L356.2,65.52 L365.2,65.52 L374.3,65.53 L383.3,65.56 L392.4,65.55 L401.4,65.54 L403.0,65.55" fill="none" stroke="#8670a6" stroke-width="1.15"/>
<path stroke-linejoin="round" d="M417.0,65.55 L419.4,65.55 L420.0,65.55 L427.0,65.55 L428.5,65.54 L437.5,65.57 L440.0,65.55 L446.6,65.56 L453.6,65.55 L455.6,65.53 L456.0,65.55 L456.4,65.55 L462.0,65.55 L464.6,65.55 L466.0,65.55" fill="none" stroke="#8670a6" stroke-width="1.15"/>
<path d="M259.5,65.9 C261,65.2 262,65.0 263.6,65.0 C265.2,65.0 266.2,65.2 267.7,65.9" fill="none" stroke="#7a6299" stroke-width="1.1" stroke-linecap="round"/>
<rect x="23.7" y="188.3" width="8.099999999999998" height="2" rx="1" fill="#7eb26d"/>
<text x="39.8" y="191.25" font-size="7.9" fill="#383c41" text-anchor="start" font-weight="400" stroke="#383c41" stroke-width="0.1">memory:memory-used:value</text>
<rect x="148.7" y="188.3" width="8.099999999999994" height="2" rx="1" fill="#eab839"/>
<text x="164.79999999999998" y="191.25" font-size="7.9" fill="#383c41" text-anchor="start" font-weight="400" stroke="#383c41" stroke-width="0.1">memory:memory-cached:value</text>
<rect x="282.0" y="188.3" width="8.100000000000023" height="2" rx="1" fill="#6ed0e0"/>
<text x="298.1" y="191.25" font-size="7.9" fill="#383c41" text-anchor="start" font-weight="400" stroke="#383c41" stroke-width="0.1">memory:memory-slab_recl:value</text>
<rect x="23.7" y="200.7" width="8.099999999999998" height="2" rx="1" fill="#ef843c"/>
<text x="39.8" y="203.64999999999998" font-size="7.9" fill="#383c41" text-anchor="start" font-weight="400" stroke="#383c41" stroke-width="0.1">memory:memory-slab_unrecl:value</text>
<rect x="171.2" y="200.7" width="8.099999999999994" height="2" rx="1" fill="#e24d42"/>
<text x="187.29999999999998" y="203.64999999999998" font-size="7.9" fill="#383c41" text-anchor="start" font-weight="400" stroke="#383c41" stroke-width="0.1">memory:memory-buffered:value</text>
<rect x="308.4" y="200.7" width="8.100000000000023" height="2" rx="1" fill="#1f78c1"/>
<text x="324.5" y="203.64999999999998" font-size="7.9" fill="#383c41" text-anchor="start" font-weight="400" stroke="#383c41" stroke-width="0.1">memory:memory-free:value</text>
</svg></div>
<div class="panel" style="left:504px;top:33px;width:488px;height:180px">
<svg width="488" height="180" viewBox="504 33 488 180">
<text x="509.8" y="47.199999999999996" font-size="9.6" fill="#24292e" text-anchor="start" font-weight="400" stroke="#24292e" stroke-width="0.1" letter-spacing="-0.1">Utilisation échange</text>
<circle cx="604.0" cy="43.6" r="3.6" fill="none" stroke="#3d4147" stroke-width="0.85"/><circle cx="604.0" cy="42.25" r="0.5" fill="#3d4147"/><line x1="604.0" y1="43.65" x2="604.0" y2="45.1" stroke="#3d4147" stroke-width="0.95" stroke-linecap="round"/>
<text x="536.7" y="66.7" font-size="7.5" fill="#383c41" text-anchor="end" font-weight="400" stroke="#383c41" stroke-width="0.1">1 B</text>
<line x1="539.0" y1="64.0" x2="974.4" y2="64.0" stroke="rgba(0,10,23,0.09)" stroke-width="0.6"/>
<text x="536.7" y="94.8" font-size="7.5" fill="#383c41" text-anchor="end" font-weight="400" stroke="#383c41" stroke-width="0.1">0.750 B</text>
<line x1="539.0" y1="92.1" x2="974.4" y2="92.1" stroke="rgba(0,10,23,0.09)" stroke-width="0.6"/>
<text x="536.7" y="122.95" font-size="7.5" fill="#383c41" text-anchor="end" font-weight="400" stroke="#383c41" stroke-width="0.1">0.500 B</text>
<line x1="539.0" y1="120.25" x2="974.4" y2="120.25" stroke="rgba(0,10,23,0.09)" stroke-width="0.6"/>
<text x="536.7" y="151.04999999999998" font-size="7.5" fill="#383c41" text-anchor="end" font-weight="400" stroke="#383c41" stroke-width="0.1">0.250 B</text>
<line x1="539.0" y1="148.35" x2="974.4" y2="148.35" stroke="rgba(0,10,23,0.09)" stroke-width="0.6"/>
<text x="536.7" y="179.2" font-size="7.5" fill="#383c41" text-anchor="end" font-weight="400" stroke="#383c41" stroke-width="0.1">0 B</text>
<line x1="539.0" y1="176.5" x2="974.4" y2="176.5" stroke="rgba(0,10,23,0.09)" stroke-width="0.6"/>
<line x1="592.8" y1="64.0" x2="592.8" y2="176.5" stroke="rgba(0,10,23,0.09)" stroke-width="0.6"/>
<text x="592.8" y="189.1" font-size="7.5" fill="#383c41" text-anchor="middle" font-weight="400" stroke="#383c41" stroke-width="0.1">12:00</text>
<line x1="665.35" y1="64.0" x2="665.35" y2="176.5" stroke="rgba(0,10,23,0.09)" stroke-width="0.6"/>
<text x="665.35" y="189.1" font-size="7.5" fill="#383c41" text-anchor="middle" font-weight="400" stroke="#383c41" stroke-width="0.1">16:00</text>
<line x1="737.9" y1="64.0" x2="737.9" y2="176.5" stroke="rgba(0,10,23,0.09)" stroke-width="0.6"/>
<text x="737.9" y="189.1" font-size="7.5" fill="#383c41" text-anchor="middle" font-weight="400" stroke="#383c41" stroke-width="0.1">20:00</text>
<line x1="810.45" y1="64.0" x2="810.45" y2="176.5" stroke="rgba(0,10,23,0.09)" stroke-width="0.6"/>
<text x="810.45" y="189.1" font-size="7.5" fill="#383c41" text-anchor="middle" font-weight="400" stroke="#383c41" stroke-width="0.1">00:00</text>
<line x1="883.0" y1="64.0" x2="883.0" y2="176.5" stroke="rgba(0,10,23,0.09)" stroke-width="0.6"/>
<text x="883.0" y="189.1" font-size="7.5" fill="#383c41" text-anchor="middle" font-weight="400" stroke="#383c41" stroke-width="0.1">04:00</text>
<line x1="955.5" y1="64.0" x2="955.5" y2="176.5" stroke="rgba(0,10,23,0.09)" stroke-width="0.6"/>
<text x="955.5" y="189.1" font-size="7.5" fill="#383c41" text-anchor="middle" font-weight="400" stroke="#383c41" stroke-width="0.1">08:00</text>
<line x1="539.0" y1="176.45" x2="974.4" y2="176.45" stroke="#9ad2ad" stroke-width="1"/>
<rect x="516.0" y="200.7" width="8.100000000000023" height="2" rx="1" fill="#7eb26d"/>
<text x="531.9" y="203.64999999999998" font-size="7.9" fill="#383c41" text-anchor="start" font-weight="400" stroke="#383c41" stroke-width="0.1">swap:swap-used:value</text>
<rect x="621.0" y="200.7" width="8.100000000000023" height="2" rx="1" fill="#eab839"/>
<text x="636.9" y="203.64999999999998" font-size="7.9" fill="#383c41" text-anchor="start" font-weight="400" stroke="#383c41" stroke-width="0.1">swap:swap-cached:value</text>
<rect x="734.3" y="200.7" width="8.100000000000023" height="2" rx="1" fill="#6ed0e0"/>
<text x="750.1999999999999" y="203.64999999999998" font-size="7.9" fill="#383c41" text-anchor="start" font-weight="400" stroke="#383c41" stroke-width="0.1">swap:swap-free:value</text>
</svg></div>
<div class="panel" style="left:12px;top:217px;width:488px;height:180px">
<svg width="488" height="180" viewBox="12 217 488 180">
<text x="17.5" y="231.0" font-size="9.6" fill="#24292e" text-anchor="start" font-weight="400" stroke="#24292e" stroke-width="0.1" letter-spacing="-0.1">Débit d&#39;échange</text>
<circle cx="99.3" cy="228.1" r="3.6" fill="none" stroke="#3d4147" stroke-width="0.85"/><circle cx="99.3" cy="226.75" r="0.5" fill="#3d4147"/><line x1="99.3" y1="228.15" x2="99.3" y2="229.6" stroke="#3d4147" stroke-width="0.95" stroke-linecap="round"/>
<text x="49.7" y="251.0" font-size="7.5" fill="#383c41" text-anchor="end" font-weight="400" stroke="#383c41" stroke-width="0.1">1</text>
<line x1="53.0" y1="248.3" x2="482.0" y2="248.3" stroke="rgba(0,10,23,0.09)" stroke-width="0.6"/>
<text x="49.7" y="279.05" font-size="7.5" fill="#383c41" text-anchor="end" font-weight="400" stroke="#383c41" stroke-width="0.1">0.750</text>
<line x1="53.0" y1="276.35" x2="482.0" y2="276.35" stroke="rgba(0,10,23,0.09)" stroke-width="0.6"/>
<text x="49.7" y="307.09999999999997" font-size="7.5" fill="#383c41" text-anchor="end" font-weight="400" stroke="#383c41" stroke-width="0.1">0.500</text>
<line x1="53.0" y1="304.4" x2="482.0" y2="304.4" stroke="rgba(0,10,23,0.09)" stroke-width="0.6"/>
<text x="49.7" y="335.15" font-size="7.5" fill="#383c41" text-anchor="end" font-weight="400" stroke="#383c41" stroke-width="0.1">0.250</text>
<line x1="53.0" y1="332.45" x2="482.0" y2="332.45" stroke="rgba(0,10,23,0.09)" stroke-width="0.6"/>
<text x="49.7" y="363.2" font-size="7.5" fill="#383c41" text-anchor="end" font-weight="400" stroke="#383c41" stroke-width="0.1">0</text>
<line x1="53.0" y1="360.5" x2="482.0" y2="360.5" stroke="rgba(0,10,23,0.09)" stroke-width="0.6"/>
<line x1="105.4" y1="248.3" x2="105.4" y2="360.5" stroke="rgba(0,10,23,0.09)" stroke-width="0.6"/>
<text x="105.4" y="373.0" font-size="7.5" fill="#383c41" text-anchor="middle" font-weight="400" stroke="#383c41" stroke-width="0.1">12:00</text>
<line x1="177.02" y1="248.3" x2="177.02" y2="360.5" stroke="rgba(0,10,23,0.09)" stroke-width="0.6"/>
<text x="177.02" y="373.0" font-size="7.5" fill="#383c41" text-anchor="middle" font-weight="400" stroke="#383c41" stroke-width="0.1">16:00</text>
<line x1="248.64" y1="248.3" x2="248.64" y2="360.5" stroke="rgba(0,10,23,0.09)" stroke-width="0.6"/>
<text x="248.64" y="373.0" font-size="7.5" fill="#383c41" text-anchor="middle" font-weight="400" stroke="#383c41" stroke-width="0.1">20:00</text>
<line x1="320.26" y1="248.3" x2="320.26" y2="360.5" stroke="rgba(0,10,23,0.09)" stroke-width="0.6"/>
<text x="320.26" y="373.0" font-size="7.5" fill="#383c41" text-anchor="middle" font-weight="400" stroke="#383c41" stroke-width="0.1">00:00</text>
<line x1="391.88" y1="248.3" x2="391.88" y2="360.5" stroke="rgba(0,10,23,0.09)" stroke-width="0.6"/>
<text x="391.88" y="373.0" font-size="7.5" fill="#383c41" text-anchor="middle" font-weight="400" stroke="#383c41" stroke-width="0.1">04:00</text>
<line x1="463.5" y1="248.3" x2="463.5" y2="360.5" stroke="rgba(0,10,23,0.09)" stroke-width="0.6"/>
<text x="463.5" y="373.0" font-size="7.5" fill="#383c41" text-anchor="middle" font-weight="400" stroke="#383c41" stroke-width="0.1">08:00</text>
<text x="0" y="0" font-size="7.7" fill="#383c41" text-anchor="middle" font-weight="400" transform="translate(25.8,308.9) rotate(-90)" stroke="#2f3338" stroke-width="0.12">Pages/sec</text>
<line x1="53.0" y1="360.5" x2="482.0" y2="360.5" stroke="#e3c66e" stroke-width="1"/>
<rect x="23.9" y="384.6" width="8.100000000000001" height="2" rx="1" fill="#7eb26d"/>
<text x="39.7" y="387.55" font-size="7.9" fill="#383c41" text-anchor="start" font-weight="400" stroke="#383c41" stroke-width="0.1">swap:swap_io-in:value</text>
<rect x="127.8" y="384.6" width="8.100000000000009" height="2" rx="1" fill="#eab839"/>
<text x="143.6" y="387.55" font-size="7.9" fill="#383c41" text-anchor="start" font-weight="400" stroke="#383c41" stroke-width="0.1">swap:swap_io-out:value</text>
</svg></div>
</div></body></html>
